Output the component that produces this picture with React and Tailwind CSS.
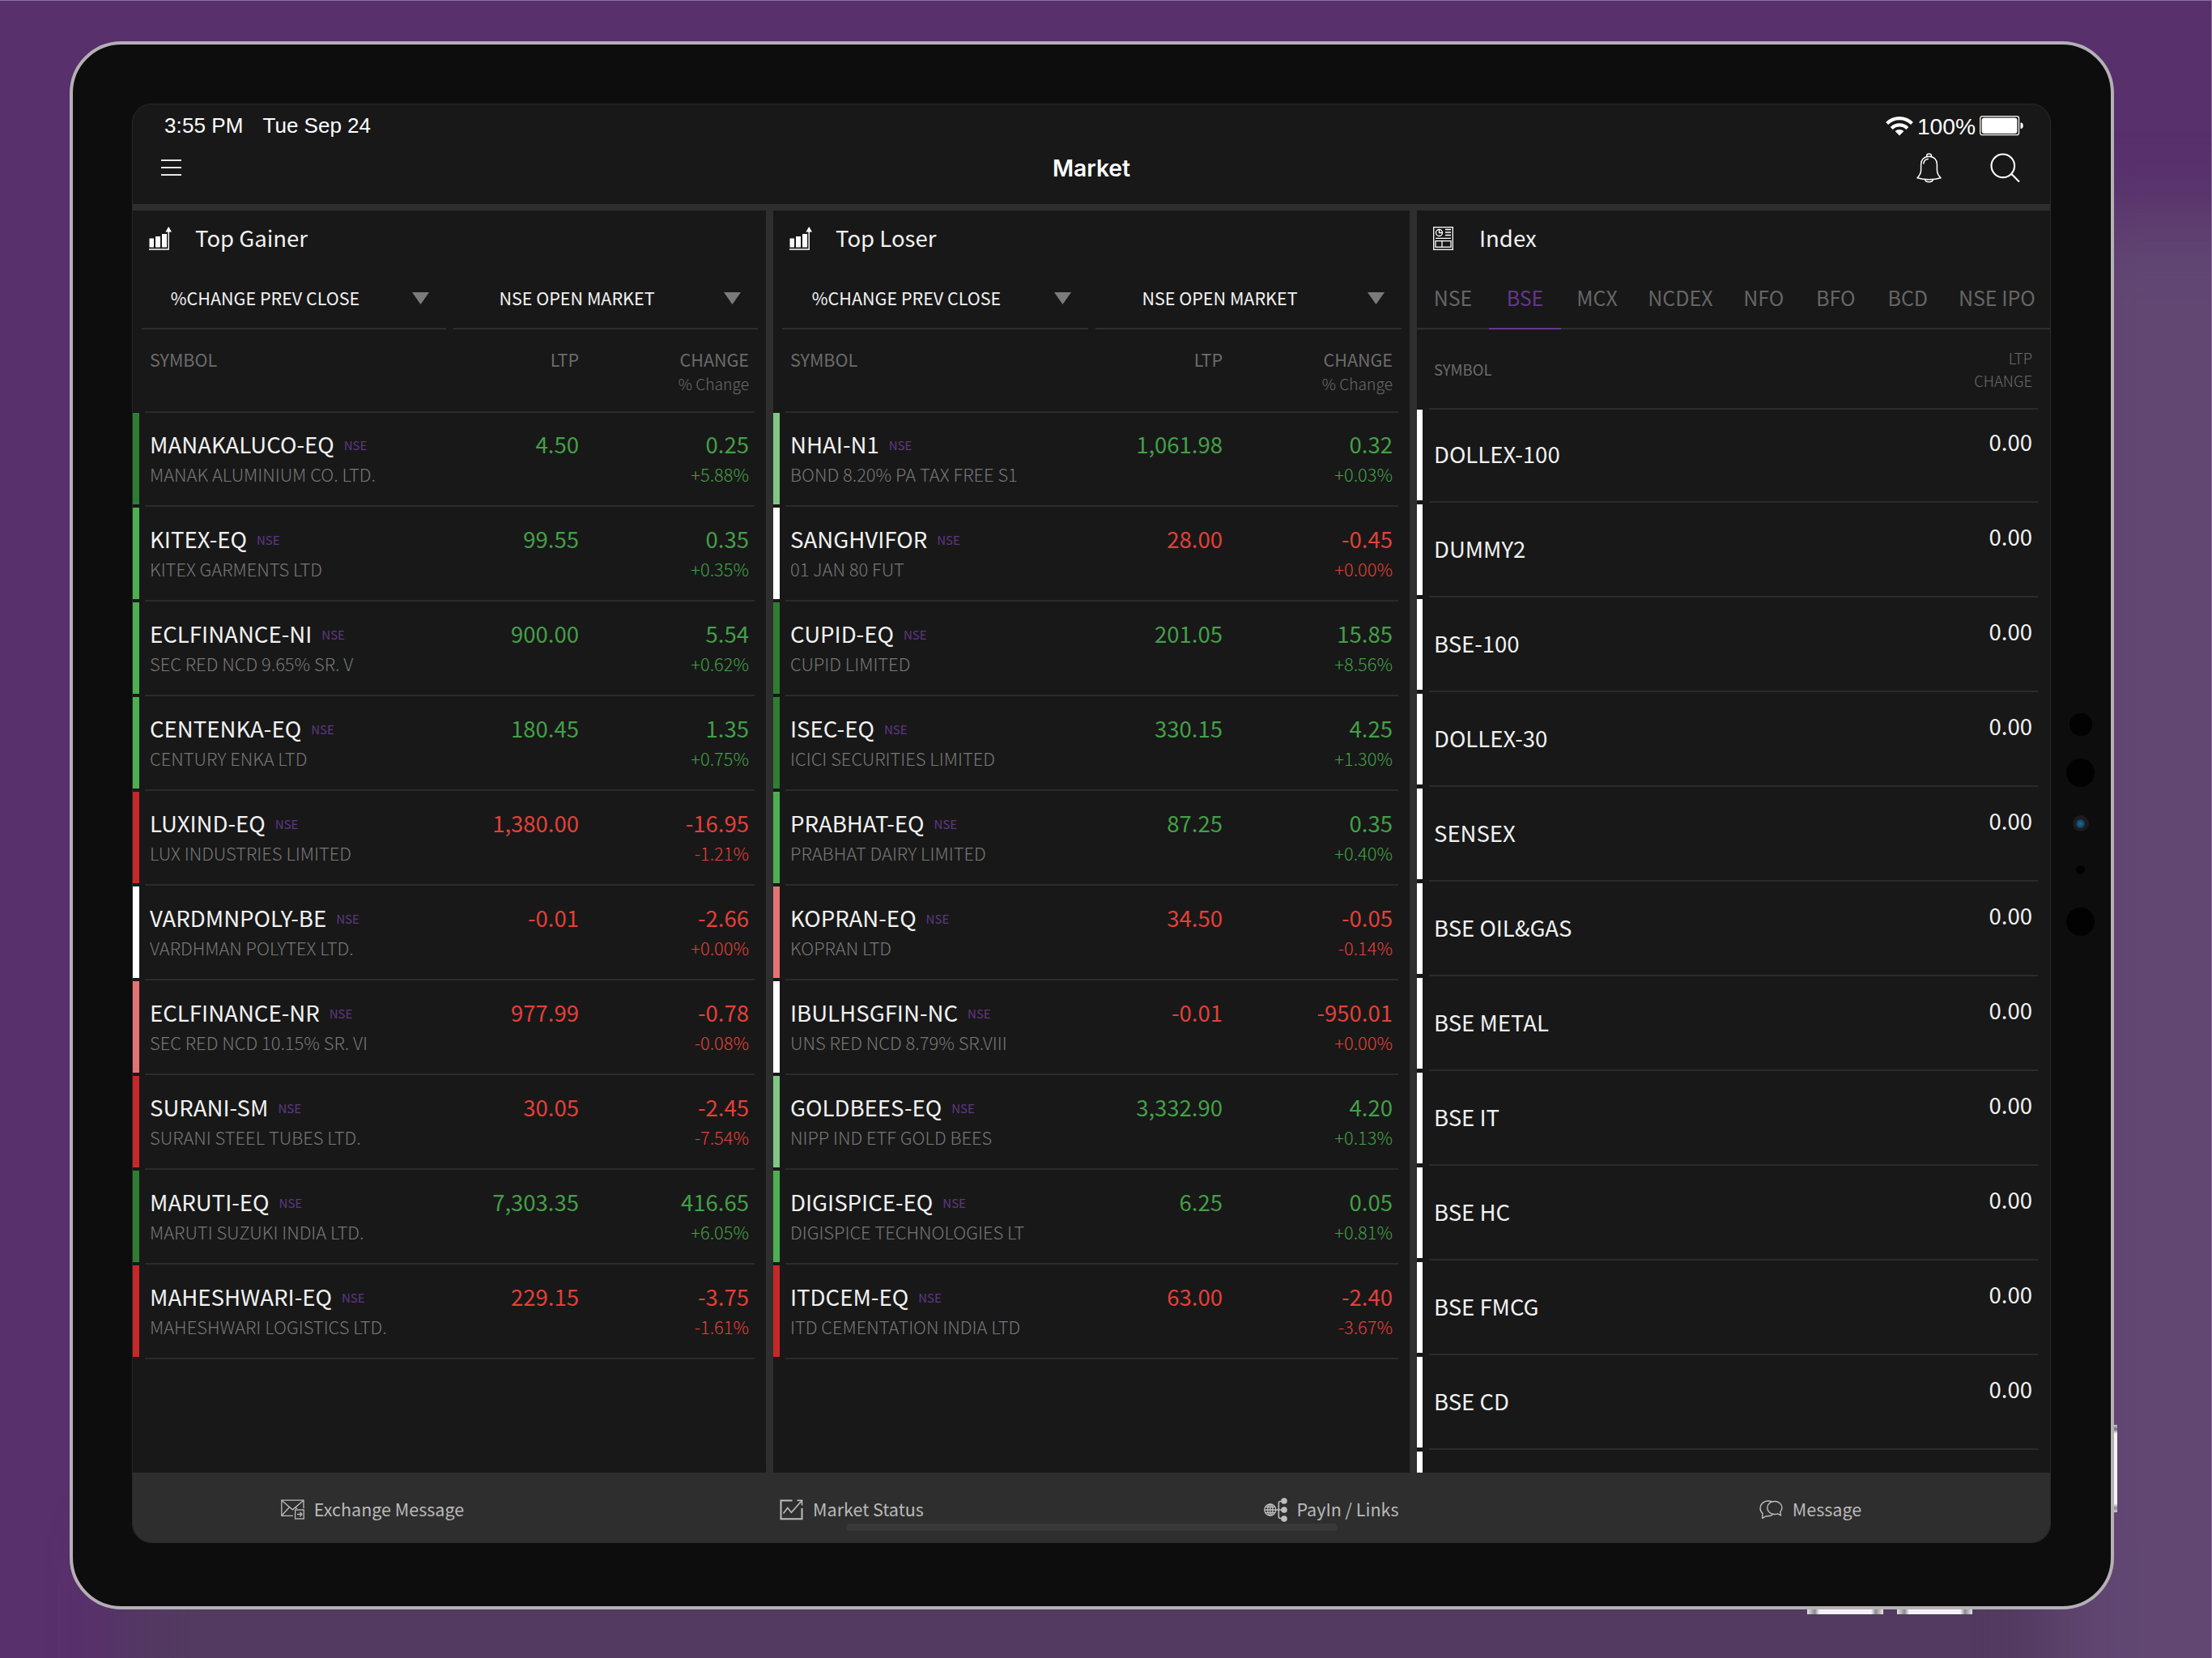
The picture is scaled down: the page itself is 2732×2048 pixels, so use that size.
const gainers = [
  { symbol: 'MANAKALUCO-EQ', name: 'MANAK ALUMINIUM CO. LTD.', ltp: '4.50', change: '0.25', pct: '+5.88%', up: true, bar: 'bg-[#2e7d32]' },
  { symbol: 'KITEX-EQ', name: 'KITEX GARMENTS LTD', ltp: '99.55', change: '0.35', pct: '+0.35%', up: true, bar: 'bg-[#4caf50]' },
  { symbol: 'ECLFINANCE-NI', name: 'SEC RED NCD 9.65% SR. V', ltp: '900.00', change: '5.54', pct: '+0.62%', up: true, bar: 'bg-[#4caf50]' },
  { symbol: 'CENTENKA-EQ', name: 'CENTURY ENKA LTD', ltp: '180.45', change: '1.35', pct: '+0.75%', up: true, bar: 'bg-[#4caf50]' },
  { symbol: 'LUXIND-EQ', name: 'LUX INDUSTRIES LIMITED', ltp: '1,380.00', change: '-16.95', pct: '-1.21%', up: false, bar: 'bg-[#c62828]' },
  { symbol: 'VARDMNPOLY-BE', name: 'VARDHMAN POLYTEX LTD.', ltp: '-0.01', change: '-2.66', pct: '+0.00%', up: false, bar: 'bg-white' },
  { symbol: 'ECLFINANCE-NR', name: 'SEC RED NCD 10.15% SR. VI', ltp: '977.99', change: '-0.78', pct: '-0.08%', up: false, bar: 'bg-[#e57373]' },
  { symbol: 'SURANI-SM', name: 'SURANI STEEL TUBES LTD.', ltp: '30.05', change: '-2.45', pct: '-7.54%', up: false, bar: 'bg-[#c62828]' },
  { symbol: 'MARUTI-EQ', name: 'MARUTI SUZUKI INDIA LTD.', ltp: '7,303.35', change: '416.65', pct: '+6.05%', up: true, bar: 'bg-[#2e7d32]' },
  { symbol: 'MAHESHWARI-EQ', name: 'MAHESHWARI LOGISTICS LTD.', ltp: '229.15', change: '-3.75', pct: '-1.61%', up: false, bar: 'bg-[#c62828]' },
]

const losers = [
  { symbol: 'NHAI-N1', name: 'BOND 8.20% PA TAX FREE S1', ltp: '1,061.98', change: '0.32', pct: '+0.03%', up: true, bar: 'bg-[#81c784]' },
  { symbol: 'SANGHVIFOR', name: '01 JAN 80 FUT', ltp: '28.00', change: '-0.45', pct: '+0.00%', up: false, bar: 'bg-white' },
  { symbol: 'CUPID-EQ', name: 'CUPID LIMITED', ltp: '201.05', change: '15.85', pct: '+8.56%', up: true, bar: 'bg-[#2e7d32]' },
  { symbol: 'ISEC-EQ', name: 'ICICI SECURITIES LIMITED', ltp: '330.15', change: '4.25', pct: '+1.30%', up: true, bar: 'bg-[#2e7d32]' },
  { symbol: 'PRABHAT-EQ', name: 'PRABHAT DAIRY LIMITED', ltp: '87.25', change: '0.35', pct: '+0.40%', up: true, bar: 'bg-[#4caf50]' },
  { symbol: 'KOPRAN-EQ', name: 'KOPRAN LTD', ltp: '34.50', change: '-0.05', pct: '-0.14%', up: false, bar: 'bg-[#e57373]' },
  { symbol: 'IBULHSGFIN-NC', name: 'UNS RED NCD 8.79% SR.VIII', ltp: '-0.01', change: '-950.01', pct: '+0.00%', up: false, bar: 'bg-white' },
  { symbol: 'GOLDBEES-EQ', name: 'NIPP IND ETF GOLD BEES', ltp: '3,332.90', change: '4.20', pct: '+0.13%', up: true, bar: 'bg-[#81c784]' },
  { symbol: 'DIGISPICE-EQ', name: 'DIGISPICE TECHNOLOGIES LT', ltp: '6.25', change: '0.05', pct: '+0.81%', up: true, bar: 'bg-[#4caf50]' },
  { symbol: 'ITDCEM-EQ', name: 'ITD CEMENTATION INDIA LTD', ltp: '63.00', change: '-2.40', pct: '-3.67%', up: false, bar: 'bg-[#c62828]' },
]

const exchanges = ['NSE', 'BSE', 'MCX', 'NCDEX', 'NFO', 'BFO', 'BCD', 'NSE IPO']

const indices = ['DOLLEX-100', 'DUMMY2', 'BSE-100', 'DOLLEX-30', 'SENSEX', 'BSE OIL&GAS', 'BSE METAL', 'BSE IT', 'BSE HC', 'BSE FMCG', 'BSE CD', '']

function GrowthIcon() {
  return (
    <svg viewBox="0 0 28 29" className="w-[28px] h-[29px] fill-white">
      <path d="M0.5 14.5h5.5v11H0.5zM8 12h6v13.5H8zM16 9h6v16.5h-6z" />
      <path d="M24.2 0l3.8 6.5h-7.6z" />
      <path d="M0 28h24.2V5" className="fill-none stroke-white" strokeWidth="1.4" />
    </svg>
  )
}

function IndexIcon() {
  return (
    <svg viewBox="0 0 25 29" className="w-[25px] h-[29px] fill-none stroke-white" strokeWidth="1.3">
      <rect x="0.7" y="0.7" width="23.6" height="27.6" />
      <circle cx="7.5" cy="7.5" r="4" />
      <path d="M7.5 3.5v4h4M15 3.5h7M15 7h7M15 10.5h7M3 14.3h19" />
      <rect x="3" y="17.6" width="19" height="7.6" />
      <path d="M11 17.6v7.6" />
    </svg>
  )
}

function WifiIcon() {
  return (
    <svg viewBox="0 0 34 24" className="w-[34px] h-[24px] fill-none stroke-white" strokeWidth="4.2">
      <path d="M1.6 8.4a22 22 0 0 1 30.8 0" />
      <path d="M7.2 14.4a14 14 0 0 1 19.6 0" />
      <path d="M17 23.4l-5.4-5.3a7.8 7.8 0 0 1 10.8 0z" className="fill-white stroke-none" />
    </svg>
  )
}

function BatteryIcon() {
  return (
    <svg viewBox="0 0 55 25" className="w-[55px] h-[25px]">
      <rect x="0.7" y="0.7" width="47.8" height="23" rx="2.5" className="fill-none stroke-white" strokeWidth="1.3" />
      <rect x="2.6" y="2.4" width="43.8" height="19.6" rx="3" className="fill-white" />
      <path d="M50.5 8.5c2.6 0 3.2 1.6 3.2 3.8s-.6 3.8-3.2 3.8z" className="fill-white" />
    </svg>
  )
}

function BellIcon() {
  return (
    <svg viewBox="0 0 31 37" className="w-[31px] h-[37px] fill-none stroke-white" strokeWidth="1.5" strokeLinejoin="round">
      <path d="M15.5 4.2C9.3 4.2 5.6 8.4 5.6 14v7c0 4-1.4 6.5-4.6 9.8 8.5 2.5 20.5 2.5 29 0-3.2-3.3-4.6-5.8-4.6-9.8v-7c0-5.6-3.7-9.8-9.9-9.8z" />
      <path d="M12.7 4.3V3c0-2.6 5.6-2.6 5.6 0v1.3" />
      <path d="M10.5 32.8c1 4 9 4 10 0" />
      <path d="M8.8 13.5c.3-3.7 2.5-6 6-6.3" />
    </svg>
  )
}

function SearchIcon() {
  return (
    <svg viewBox="0 0 37 37" className="w-[37px] h-[37px] fill-none stroke-white" strokeWidth="2.1" strokeLinecap="round">
      <circle cx="15.8" cy="15.8" r="14.3" />
      <path d="M26.2 25.8l9.2 9.2" />
    </svg>
  )
}

function ExchangeIcon() {
  return (
    <svg viewBox="0 0 29 25" className="w-[29px] h-[25px] fill-none stroke-[#bdbdbd]" strokeWidth="1.3">
      <path d="M15 20.3H0.8V1.2h27.2v10" />
      <path d="M0.8 1.2l13.6 11.6L28 1.2M0.8 20.3l9.8-10.8M17.8 9.8l2 2" />
      <rect x="17.6" y="13" width="10.6" height="11" />
      <path d="M20 18.5h5.8M23.4 15.8l2.6 2.7-2.6 2.7" />
    </svg>
  )
}

function StatusIcon() {
  return (
    <svg viewBox="0 0 29 26" className="w-[29px] h-[26px] fill-none stroke-[#bdbdbd]">
      <path d="M15.5 1.5h-14v22.8h26V11" strokeWidth="2" />
      <path d="M4.5 17.5l5.3-7 4.6 5.7L27 2" strokeWidth="1.6" />
      <path d="M21.5 1.4h6v6" strokeWidth="1.6" />
    </svg>
  )
}

function LinksIcon() {
  return (
    <svg viewBox="0 0 29 30" className="w-[29px] h-[30px] fill-none stroke-[#bdbdbd]" strokeWidth="1.3">
      <circle cx="7.8" cy="15" r="7" />
      <ellipse cx="7.8" cy="15" rx="3.2" ry="7" />
      <path d="M7.8 8v14M0.8 15H22M1.8 11.5h12M1.8 18.5h12" />
      <path d="M23 4.5h-2.5q-2.2 0-2.2 2.2v16.6q0 2.2 2.2 2.2H23" strokeWidth="1.6" />
      <g className="fill-[#bdbdbd] stroke-none">
        <circle cx="25" cy="4" r="3.8" />
        <circle cx="25" cy="15" r="3.8" />
        <circle cx="25" cy="26" r="3.8" />
      </g>
    </svg>
  )
}

function ChatIcon() {
  return (
    <svg viewBox="0 0 29 24" className="w-[29px] h-[24px] fill-none stroke-[#bdbdbd]" strokeWidth="1.4" strokeLinejoin="round">
      <path d="M18.8 1.5c-5 0-9 3.5-9 8s4 8 9 8c1.4 0 2.7-.2 3.8-.7l4 2.2-.9-4.6c1.4-1.3 2.2-3 2.2-4.9 0-4.5-4.1-8-9.1-8z" />
      <path d="M15.5 2C14 1.3 12.3 1 10.5 1 5.2 1 1 5 1 10c0 2.6 1.2 5 3 6.6L3.6 22.4l5-2.8c3.2.6 6-.3 8.4-2.2" />
    </svg>
  )
}

function Panel({ title, icon, children }) {
  return (
    <section className="flex flex-col bg-[#181818] overflow-hidden">
      <div className="h-[68px] shrink-0 flex items-center gap-[29px] pl-[20px]">
        <div className="w-[28px]">{icon}</div>
        <h2 className="text-[27.5px] text-[#f2f2f2]">{title}</h2>
      </div>
      {children}
    </section>
  )
}

function Dropdown({ label }) {
  return (
    <div className="flex-1 h-[79px] flex items-center pt-[3px] pr-[21px] border-b-2 border-[#2e2e2e]">
      <span className="flex-1 text-center text-[21.5px] text-[#f2f2f2] pr-[29px] whitespace-nowrap">{label}</span>
      <svg viewBox="0 0 21 15" className="w-[21px] h-[15px] fill-[#7b7b7b]">
        <path d="M0 0h21l-10.5 15z" />
      </svg>
    </div>
  )
}

function StockRow({ stock }) {
  const color = stock.up ? 'text-[#43a047]' : 'text-[#e34038]'
  return (
    <div className="h-[117px] flex gap-[7px] pt-px pr-[14px]">
      <div className={`w-[8px] h-[113px] ${stock.bar}`} />
      <div className="flex-1 flex border-b-2 border-[#2b2b2b] pl-[6px] pr-[7px] pt-[20px]">
        <div className="flex-1">
          <p className="flex items-center gap-[12px] h-[36px] leading-[36px] text-[27.6px] text-[#f2f2f2] whitespace-nowrap">
            {stock.symbol}
            <span className="pt-[3px] text-[15px] leading-[34px] text-[#5f3783]">NSE</span>
          </p>
          <p className="text-[21.9px] leading-[40px] font-light text-[#777] whitespace-nowrap">{stock.name}</p>
        </div>
        <p className={`text-[27.5px] leading-[36px] ${color}`}>{stock.ltp}</p>
        <div className={`w-[210px] text-right ${color}`}>
          <p className="text-[27.5px] leading-[36px]">{stock.change}</p>
          <p className="text-[21.8px] leading-[40px] font-light">{stock.pct}</p>
        </div>
      </div>
    </div>
  )
}

function StockPanel({ title, stocks }) {
  return (
    <Panel title={title} icon={<GrowthIcon />}>
      <div className="flex gap-[9px] pl-[11px] pr-[10px]">
        <Dropdown label="%CHANGE PREV CLOSE" />
        <Dropdown label="NSE OPEN MARKET" />
      </div>
      <div className="h-[103px] -mb-px shrink-0 ml-[15px] mr-[14px] pl-[6px] pr-[7px] pt-[21px] flex border-b-2 border-[#2b2b2b] text-[21.5px] leading-[32px] text-[#6b6b6b]">
        <span className="flex-1">SYMBOL</span>
        <span>LTP</span>
        <div className="w-[210px] text-right">
          <p>CHANGE</p>
          <p className="text-[19.2px] leading-[28px] font-light">% Change</p>
        </div>
      </div>
      {stocks.map(s => <StockRow key={s.symbol} stock={s} />)}
    </Panel>
  )
}

function IndexPanel() {
  return (
    <Panel title="Index" icon={<IndexIcon />}>
      <nav className="h-[79px] shrink-0 flex border-b-2 border-[#2e2e2e]">
        {exchanges.map(name => (
          <div
            key={name}
            className={`grow flex items-center justify-center h-[79px] min-w-[89px] px-[19px] pt-[2px] border-b-2 text-[25px] whitespace-nowrap ${name === 'BSE' ? 'text-[#66378c] border-[#66378c]' : 'text-[#666] border-transparent'}`}
          >
            {name}
          </div>
        ))}
      </nav>
      <div className="h-[99px] -mb-[2px] shrink-0 ml-[15px] mr-[15px] pl-[6px] pr-[7px] flex items-center justify-between border-b-2 border-[#2b2b2b] text-[18.5px] leading-[28px] text-[#6b6b6b]">
        <span>SYMBOL</span>
        <div className="text-right font-light">
          <p>LTP</p>
          <p>CHANGE</p>
        </div>
      </div>
      {indices.map(name => (
        <div key={name} className="h-[117px] shrink-0 flex gap-[8px] pt-[2px] pr-[15px]">
          <div className="w-[7px] h-[112px] bg-white" />
          <div className="flex-1 flex justify-between border-b-2 border-[#2b2b2b] pl-[6px] pr-[7px] text-[27.5px] leading-[36px] text-[#f2f2f2]">
            <span className="pt-[36px]">{name}</span>
            <span className="pt-[21px]">{name && '0.00'}</span>
          </div>
        </div>
      ))}
    </Panel>
  )
}

function FooterItem({ icon, label }) {
  return (
    <div className="flex-1 flex items-center justify-center gap-[12px] pt-[5px] text-[21.5px] text-[#b9b9b9]">
      {icon}
      <span>{label}</span>
    </div>
  )
}

export default function App() {
  return (
    <main className="relative w-[2732px] h-[2048px] overflow-hidden bg-[#58306c] pt-[51px] pl-[86px] font-['Noto_Sans_CJK_SC',sans-serif]">
      {/* Soft shadow on the backdrop */}
      <div className="absolute left-[150px] top-[1900px] w-[2500px] h-[240px] bg-[#523a60] blur-[40px]" />
      <div className="absolute left-[2540px] top-[270px] w-[340px] h-[1900px] bg-[#614772] blur-[45px]" />
      <div className="absolute left-0 top-0 w-[2732px] h-[2048px] border-t border-r border-[#8d6ea0]" />

      {/* Hardware buttons */}
      <div className="absolute left-[2232px] top-[1985px] w-[94px] h-[9px] bg-[linear-gradient(90deg,#e6e3e8,#8a8a8a_10%,#f5f2f7_16%,#f5f2f7_84%,#8a8a8a_90%,#e6e3e8)]" />
      <div className="absolute left-[2343px] top-[1985px] w-[93px] h-[9px] bg-[linear-gradient(90deg,#e6e3e8,#8a8a8a_10%,#f5f2f7_16%,#f5f2f7_84%,#8a8a8a_90%,#e6e3e8)]" />
      <div className="absolute left-[2606px] top-[1760px] w-[9px] h-[108px] bg-[linear-gradient(180deg,#d0cdd2,#6f6a72_5%,#f5f2f7_10%,#f5f2f7_90%,#8a8a8a_95%,#d0cdd2)]" />

      <div className="relative w-[2525px] h-[1937px] flex rounded-[64px] border-4 border-[#b4b0b6] bg-[#0d0d0d] pt-[73px] pl-[73px]">
        <div className="relative w-[2370px] h-[1778px] shrink-0 flex flex-col rounded-[24px] overflow-hidden border border-[#292929] bg-[#181818]">

          {/* Status bar */}
          <div className="h-[51px] flex items-center justify-between pl-[39px] pr-[32px] pt-[2px] text-[26px] text-white font-['Liberation_Sans',sans-serif]">
            <div className="flex gap-[24px]">
              <span className="tracking-[0.1px]">3:55 PM</span>
              <span>Tue Sep 24</span>
            </div>
            <div className="flex items-center pt-px">
              <WifiIcon />
              <span className="text-[28.2px] ml-[5px] mr-[5px]">100%</span>
              <BatteryIcon />
            </div>
          </div>

          {/* Title bar */}
          <header className="h-[72px] grid grid-cols-3 pl-[37px] pr-[37px]">
            <div className="flex flex-col gap-[7px] pt-[17px] -ml-[2px]">
              <div className="w-[25px] h-[2px] bg-[#e6e6e6]" />
              <div className="w-[25px] h-[2px] bg-[#e6e6e6]" />
              <div className="w-[25px] h-[2px] bg-[#e6e6e6]" />
            </div>
            <h1 className="text-center text-[28.3px] leading-[56px] font-semibold text-white font-['Inter',sans-serif]">Market</h1>
            <div className="flex justify-end gap-[60px] pt-[9px]">
              <BellIcon />
              <SearchIcon />
            </div>
          </header>

          {/* Panels */}
          <div className="h-[1567px] grid grid-cols-[782px_786px_1fr] gap-[9px] border-t-8 border-[#2e2e2e] bg-[#2e2e2e]">
            <StockPanel title="Top Gainer" stocks={gainers} />
            <StockPanel title="Top Loser" stocks={losers} />
            <IndexPanel />
          </div>

          {/* Bottom bar */}
          <footer className="flex-1 flex bg-[#2e2e2e]">
            <FooterItem icon={<ExchangeIcon />} label="Exchange Message" />
            <FooterItem icon={<StatusIcon />} label="Market Status" />
            <FooterItem icon={<LinksIcon />} label="PayIn / Links" />
            <FooterItem icon={<ChatIcon />} label="Message" />
          </footer>
          <div className="absolute left-[881px] bottom-[14px] w-[607px] h-[9px] rounded-full bg-white/5" />
        </div>

        {/* Camera and sensors */}
        <div className="w-[73px] flex flex-col items-center pt-[753px]">
          <div className="w-[28px] h-[28px] rounded-full bg-[#020202]" />
          <div className="w-[35px] h-[35px] mt-[28px] rounded-full bg-[#020202]" />
          <div className="w-[20px] h-[20px] mt-[35px] rounded-full bg-[#1b1b20] flex items-center justify-center">
            <div className="w-[11px] h-[11px] rounded-full bg-[radial-gradient(circle,#1c7196,#0b2436)]" />
          </div>
          <div className="w-[11px] h-[11px] mt-[42px] rounded-full bg-[#020202]" />
          <div className="w-[35px] h-[35px] mt-[41px] rounded-full bg-[#020202]" />
        </div>
      </div>
    </main>
  )
}
